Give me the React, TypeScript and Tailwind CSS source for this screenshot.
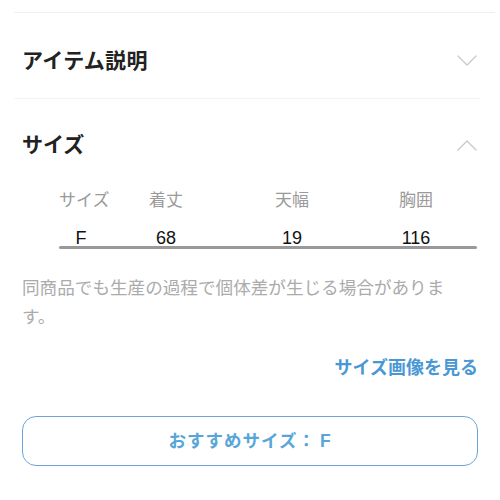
import React from "react";

const font = { fontFamily: '"Liberation Sans", "Noto Sans CJK JP", sans-serif' };

function Chevron({ up }: { up?: boolean }) {
  return (
    <svg width="20" height="12" viewBox="0 0 20 12" fill="none" className="mr-[1px]">
      <path
        d={up ? "M1 11 L10 2 L19 11" : "M1 1 L10 10 L19 1"}
        stroke="#c8c8c8"
        strokeWidth="1.3"
        strokeLinecap="round"
        strokeLinejoin="round"
      />
    </svg>
  );
}

const rows = [
  ["サイズ", "着丈", "天幅", "胸囲"],
  ["F", "68", "19", "116"],
];

export default function App() {
  return (
    <div className="w-[500px] h-[500px] bg-white overflow-hidden" style={font}>
      <div className="h-3" />
      <div className="ml-[14px] mr-[5px] border-t border-[#f0f0f0]" />

      <div className="h-[85px] flex items-center justify-between pl-[22px] pr-[22px] pt-[10px]">
        <span className="text-[21px] font-bold text-[#222] tracking-[0.3px]">アイテム説明</span>
        <Chevron />
      </div>
      <div className="ml-[14px] mr-[20px] border-t border-[#f3f3f3]" />

      <div className="h-[88px] flex items-center justify-between pl-[22px] pr-[22px] pt-[4px]">
        <span className="text-[21px] font-bold text-[#222]">サイズ</span>
        <Chevron up />
      </div>

      <div className="ml-[59px] w-[418px]">
        <div className="grid grid-cols-[44px_126px_126px_122px] text-[17px] text-[#9a9a9a] h-[28px] items-center">
          {rows[0].map((c) => (
            <span key={c} className="text-center whitespace-nowrap">{c}</span>
          ))}
        </div>
        <div className="grid grid-cols-[44px_126px_126px_122px] text-[18px] text-[#111] h-[31px] items-center pt-[10px]">
          {rows[1].map((c) => (
            <span key={c} className="text-center whitespace-nowrap">{c}</span>
          ))}
        </div>
        <div className="h-[3px] rounded-full bg-[#999]" />
      </div>

      <p className="ml-[22px] w-[440px] mt-[25px] text-[17.6px] leading-[29px] text-[#ababab]">
        同商品でも生産の過程で個体差が生じる場合があります。
      </p>

      <div className="flex justify-end pr-[22px] mt-[23px]">
        <span className="text-[18px] font-bold text-[#4a97d6]">サイズ画像を見る</span>
      </div>

      <div className="mx-[22px] mt-[34px] h-[50px] rounded-[14px] border-[1.5px] border-[#6aa5dd] flex items-center justify-center">
        <span className="text-[17.5px] font-bold text-[#58a6d8] tracking-[1px]">
          おすすめサイズ：<span className="ml-[4px]">F</span>
        </span>
      </div>
    </div>
  );
}
